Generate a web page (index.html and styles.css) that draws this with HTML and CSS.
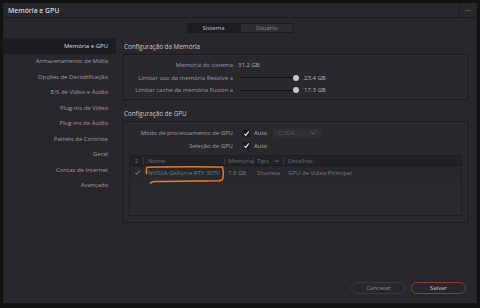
FILE: index.html
```html
<!DOCTYPE html>
<html lang="pt">
<head>
  <meta charset="UTF-8" />
  <title>Memória e GPU</title>
  <link rel="stylesheet" href="styles.css">
</head>
<body>
  <div class="window">
    <div class="titlebar">
      <span class="title">Memória e GPU</span>
      <span class="more">•••</span>
    </div>

    <div class="tabs">
      <span class="tab active">Sistema</span>
      <span class="tab">Usuário</span>
    </div>

    <div class="main">
      <ul class="sidebar">
        <li class="selected">Memória e GPU</li>
        <li>Armazenamento de Mídia</li>
        <li>Opções de Decodificação</li>
        <li>E/S de Vídeo e Áudio</li>
        <li>Plug-ins de Vídeo</li>
        <li>Plug-ins de Áudio</li>
        <li>Painéis de Controle</li>
        <li>Geral</li>
        <li>Contas de Internet</li>
        <li>Avançado</li>
      </ul>

      <div class="content">
        <h2>Configuração da Memória</h2>
        <div class="panel mem-panel">
          <div class="row">
            <span class="label">Memória do sistema</span>
            <span class="value">31.2 GB</span>
          </div>
          <div class="row">
            <span class="label">Limitar uso da memória Resolve a</span>
            <span class="slider"><span class="knob"></span></span>
            <span class="value">23.4 GB</span>
          </div>
          <div class="row">
            <span class="label">Limitar cache da memória Fusion a</span>
            <span class="slider"><span class="knob"></span></span>
            <span class="value">17.3 GB</span>
          </div>
        </div>

        <h2>Configuração de GPU</h2>
        <div class="panel gpu-panel">
          <div class="row">
            <span class="label">Modo de processamento de GPU</span>
            <span class="check">
              <svg width="7" height="7" viewBox="0 0 7 7"><path d="M1.3 3.8 L2.8 5.3 L5.8 1.4" fill="none" stroke="#e8e8e8" stroke-width="1.1"/></svg>
            </span>
            <span class="auto">Auto</span>
            <span class="select">CUDA
              <svg width="6" height="4" viewBox="0 0 6 4"><path d="M0.5 0.8 L3 3 L5.5 0.8" fill="none" stroke="#6c6c72" stroke-width="0.9"/></svg>
            </span>
          </div>
          <div class="row">
            <span class="label">Seleção de GPU</span>
            <span class="check">
              <svg width="7" height="7" viewBox="0 0 7 7"><path d="M1.3 3.8 L2.8 5.3 L5.8 1.4" fill="none" stroke="#e8e8e8" stroke-width="1.1"/></svg>
            </span>
            <span class="auto">Auto</span>
          </div>

          <div class="table">
            <div class="thead">
              <span class="c-check">2</span>
              <span class="c-name">Nome</span>
              <span class="c-mem">Memória</span>
              <span class="c-type">Tipo
                <svg width="6" height="4" viewBox="0 0 6 4"><path d="M0.5 0.8 L3 3 L5.5 0.8" fill="none" stroke="#6c6c72" stroke-width="0.9"/></svg>
              </span>
              <span class="c-det">Detalhes</span>
            </div>
            <div class="trow">
              <span class="c-check">
                <svg width="7" height="7" viewBox="0 0 7 7"><path d="M1.3 3.8 L2.8 5.3 L5.8 1.4" fill="none" stroke="#8a8a90" stroke-width="1"/></svg>
              </span>
              <span class="c-name">NVIDIA GeForce RTX 3070</span>
              <span class="c-mem">7,8 GB</span>
              <span class="c-type">Discreta</span>
              <span class="c-det">GPU de Vídeo Principal</span>
            </div>
            <svg class="mark" width="82" height="20" viewBox="0 0 82 20">
              <path d="M1.5 8.5 C1.3 6 1.4 4 1.8 2.2 C25 1.6 55 1.8 77.5 1.9 C78.5 5.5 78.6 10 77.8 13.6 C77.3 15.3 76 15.6 74 15.7 C55 16 30 15.8 10 16.6 C7.5 16.8 6 17.4 5.6 18.2" fill="none" stroke="#f07a22" stroke-width="1.5" stroke-linecap="round" stroke-linejoin="round"/>
            </svg>
          </div>
        </div>
      </div>
    </div>

    <div class="footer">
      <button class="btn">Cancelar</button>
      <button class="btn primary">Salvar</button>
    </div>
  </div>
</body>
</html>
```

FILE: styles.css
```css
* {
  box-sizing: border-box;
}
body {
  margin: 0;
  background-color: #131313;
  font-family: "Open Sans", "Noto Sans", sans-serif;
  font-size: 6px;
  color: #9d9da2;
  white-space: nowrap;
}
.window {
  margin: 3px 3px 0 3px;
  width: 474px;
  height: 300px;
  background-color: #28272c;
  display: flex;
  flex-direction: column;
}
.titlebar {
  height: 15px;
  display: flex;
  align-items: center;
  justify-content: space-between;
  border-bottom: 1px solid #1b1a1e;
  background-color: #28272c;
}
.title {
  padding-left: 5px;
  color: #d6d6d8;
  font-weight: 600;
  font-size: 6.8px;
}
.more {
  width: 18px;
  height: 14px;
  border-left: 1px solid #1b1a1e;
  color: #9a9a9e;
  font-size: 4px;
  letter-spacing: 0.5px;
  display: flex;
  align-items: center;
  justify-content: center;
}
.tabs {
  display: flex;
  justify-content: center;
  margin-top: 5px;
}
.tab {
  width: 53px;
  height: 10px;
  display: flex;
  align-items: center;
  justify-content: center;
  background-color: #2e2d32;
  border: 1px solid #1c1b1f;
  color: #8c8c91;
}
.tab.active {
  background-color: #1e1d21;
  color: #c4c4c8;
}
.main {
  flex: 1;
  display: flex;
  margin-top: 5px;
}
.sidebar {
  list-style: none;
  margin: 0;
  padding: 0;
  width: 113px;
  flex-shrink: 0;
}
.sidebar li {
  height: 15.5px;
  display: flex;
  align-items: center;
  justify-content: flex-end;
  padding-right: 8px;
}
.sidebar li.selected {
  background-color: #1d1c20;
  color: #dcdcde;
}
.content {
  flex: 1;
  padding: 0 9px 0 7px;
}
h2 {
  margin: 0;
  height: 16px;
  display: flex;
  align-items: center;
  font-size: 6.3px;
  font-weight: normal;
  color: #c8c8cc;
  padding-left: 1px;
}
.panel {
  border: 1px solid #1b1a1e;
  background-color: #29282d;
  box-shadow: inset 0 0 0 1px #2d2c31;
}
.mem-panel {
  height: 46px;
  padding-top: 4px;
  margin-bottom: 5px;
}
.gpu-panel {
  height: 102px;
  padding-top: 5px;
}
.row {
  display: flex;
  align-items: center;
  height: 12.6px;
}
.label {
  width: 109px;
  flex-shrink: 0;
  text-align: right;
}
.value {
  margin-left: 5px;
  color: #b4b4b8;
}
.slider {
  position: relative;
  margin-left: 7px;
  width: 56px;
  height: 1px;
  background-color: #141416;
}
.slider + .value {
  margin-left: 8px;
}
.knob {
  position: absolute;
  right: -3px;
  top: -2.5px;
  width: 6px;
  height: 6px;
  border-radius: 50%;
  background-color: #c6c6c8;
}
.check {
  margin-left: 10px;
  width: 7px;
  height: 7px;
  background-color: #1b1a1e;
  display: flex;
}
.auto {
  margin-left: 4px;
  color: #b0b0b4;
}
.select {
  margin-left: 6px;
  width: 50px;
  height: 10px;
  background-color: #2f2e33;
  border: 1px solid #2a292e;
  color: #5e5e64;
  display: flex;
  align-items: center;
  justify-content: space-between;
  padding: 0 6px 0 4px;
}
.table {
  position: relative;
  margin: 3px 5px 0 5px;
  height: 61px;
  border: 1px solid #1e1d21;
  background: linear-gradient(#28272c 0, #28272c 28px, #2b2a2f 28px);
}
.thead, .trow {
  display: flex;
  align-items: center;
}
.thead {
  height: 10px;
  background-color: #222125;
  color: #6e6e74;
  border-bottom: 1px solid #1b1a1e;
}
.thead span {
  border-right: 1px solid #38373c;
  height: 8px;
  display: flex;
  align-items: center;
}
.thead .c-det {
  border-right: none;
}
.trow {
  height: 14px;
  color: #7c7c82;
  border-bottom: 1px solid #2d2c31;
}
.thead span, .trow span {
  flex-shrink: 0;
}
.c-check {
  width: 14px;
  justify-content: center;
  display: flex;
}
.c-name {
  width: 81px;
  padding-left: 4px;
}
.c-mem {
  width: 29px;
  padding-left: 3px;
}
.c-type {
  width: 30px;
  padding-left: 3px;
  justify-content: space-between;
  padding-right: 3px;
}
.thead .c-det, .trow .c-det {
  flex: 1;
  padding-left: 4px;
}
.mark {
  position: absolute;
  left: 15px;
  top: 9px;
}
.footer {
  display: flex;
  justify-content: flex-end;
  gap: 5px;
  padding: 0 11px 9px 0;
}
.btn {
  width: 55px;
  height: 12px;
  border-radius: 6px;
  border: 1px solid #3a393e;
  background-color: #28272c;
  color: #8e8e93;
  font-family: "Open Sans", "Noto Sans", sans-serif;
  font-size: 6px;
  padding: 0;
}
.btn.primary {
  border-color: #95363a;
  color: #c4c4c8;
}
```
